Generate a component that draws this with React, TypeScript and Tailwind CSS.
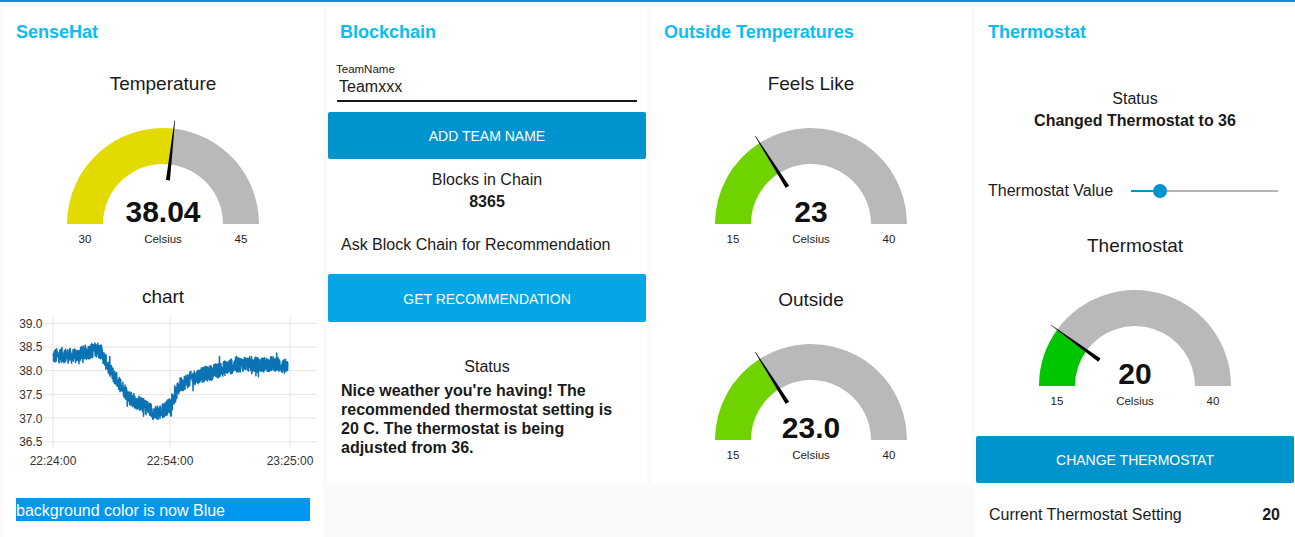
import React from "react";

const TEXT = "#1a1a1a";

function Gauge({
  title,
  value,
  min,
  max,
  v,
  color,
}: {
  title: string;
  value: string;
  min: number;
  max: number;
  v: number;
  color: string;
}) {
  const cx = 160,
    cy = 126,
    R = 96,
    r = 60;
  const frac = (v - min) / (max - min);
  const theta = Math.PI * (1 - frac);
  const pt = (rad: number, a: number) => [cx + rad * Math.cos(a), cy - rad * Math.sin(a)];
  const arc = (a1: number, a2: number) => {
    const [x1, y1] = pt(R, a1);
    const [x2, y2] = pt(R, a2);
    const [x3, y3] = pt(r, a2);
    const [x4, y4] = pt(r, a1);
    return `M${x1} ${y1} A${R} ${R} 0 0 1 ${x2} ${y2} L${x3} ${y3} A${r} ${r} 0 0 0 ${x4} ${y4} Z`;
  };
  const d = [Math.cos(theta), -Math.sin(theta)];
  const p = [Math.sin(theta), Math.cos(theta)];
  const b = [cx + 44 * d[0], cy + 44 * d[1]];
  const t = [cx + 104 * d[0], cy + 104 * d[1]];
  const needle = [
    [b[0] + 2 * p[0], b[1] + 2 * p[1]],
    [t[0] + 0.3 * p[0], t[1] + 0.3 * p[1]],
    [t[0] - 0.3 * p[0], t[1] - 0.3 * p[1]],
    [b[0] - 2 * p[0], b[1] - 2 * p[1]],
  ]
    .map((q) => q.join(","))
    .join(" ");
  return (
    <div className="flex flex-col items-center">
      <div className="h-[30px] pt-[1px] leading-[30px] text-[19px]" style={{ color: TEXT }}>
        {title}
      </div>
      <svg width={320} height={150} className="block">
        <path d={arc(Math.PI, theta)} fill={color} />
        <path d={arc(theta, 0)} fill="#b9b9b9" />
        <polygon points={needle} fill="#000" />
        <text x={160} y={cy - 2} textAnchor="middle" fontSize={30} fontWeight={700} fill="#111">
          {value}
        </text>
        <text x={82} y={cy + 19} textAnchor="middle" fontSize={11.5} fill="#222">
          {min}
        </text>
        <text x={160} y={cy + 19} textAnchor="middle" fontSize={11.5} fill="#222">
          Celsius
        </text>
        <text x={238} y={cy + 19} textAnchor="middle" fontSize={11.5} fill="#222">
          {max}
        </text>
      </svg>
    </div>
  );
}

function buildData() {
  const keys: [number, number][] = [
    [53, 38.3],
    [62, 38.33],
    [75, 38.3],
    [85, 38.38],
    [97, 38.45],
    [101, 38.4],
    [110, 38.0],
    [120, 37.72],
    [130, 37.42],
    [140, 37.3],
    [150, 37.18],
    [156, 37.08],
    [165, 37.18],
    [172, 37.32],
    [180, 37.7],
    [190, 37.82],
    [200, 37.9],
    [210, 37.95],
    [220, 38.02],
    [232, 38.1],
    [245, 38.15],
    [260, 38.12],
    [275, 38.15],
    [288, 38.06],
  ];
  let seed = 12345;
  const rnd = () => {
    seed = (seed * 1103515245 + 12345) % 2147483648;
    return seed / 2147483648;
  };
  const pts: string[] = [];
  const N = 1200;
  for (let i = 0; i <= N; i++) {
    const x = 53 + ((288 - 53) * i) / N;
    let k = 0;
    while (k < keys.length - 2 && keys[k + 1][0] < x) k++;
    const [x0, v0] = keys[k];
    const [x1, v1] = keys[k + 1];
    const f = Math.min(1, Math.max(0, (x - x0) / (x1 - x0)));
    let v = v0 + (v1 - v0) * f;
    v += (rnd() - 0.5) * 0.32;
    if (rnd() < 0.05) v += (rnd() - 0.5) * 0.34;
    const sx = x - 3;
    const sy = 15.3 + (39 - v) * 47.36;
    pts.push(`${sx.toFixed(2)},${sy.toFixed(2)}`);
  }
  return pts.join(" ");
}

const chartData = buildData();

function Chart() {
  const ys = [39.0, 38.5, 38.0, 37.5, 37.0, 36.5];
  const xs: [number, string][] = [
    [50, "22:24:00"],
    [167, "22:54:00"],
    [287, "23:25:00"],
  ];
  return (
    <svg width={320} height={165} className="block">
      {ys.map((v, i) => {
        const y = 15.3 + i * 23.68;
        return (
          <g key={v}>
            <line x1={40} x2={314} y1={y} y2={y} stroke="#e4e4e4" strokeWidth={1} />
            <text x={39.5} y={y + 4.5} textAnchor="end" fontSize={12} fill="#333">
              {v.toFixed(1)}
            </text>
          </g>
        );
      })}
      {xs.map(([x, l]) => (
        <g key={l}>
          <line x1={x} x2={x} y1={8.7} y2={140} stroke="#e4e4e4" strokeWidth={1} />
          <text x={x} y={157} textAnchor="middle" fontSize={12} fill="#333">
            {l}
          </text>
        </g>
      ))}
      <polyline points={chartData} fill="none" stroke="#0b72b3" strokeWidth={1.5} strokeLinejoin="round" />
    </svg>
  );
}

function Title({ children }: { children: React.ReactNode }) {
  return (
    <div className="h-[46px] pt-[2px] flex items-center px-[13px] text-[18px] font-bold text-[#0bbdf3]">
      {children}
    </div>
  );
}

export default function App() {
  return (
    <div
      className="w-[1295px] h-[537px] overflow-hidden bg-[#fafafa] font-['Liberation_Sans',Arial,sans-serif]"
      style={{ color: TEXT }}
    >
      <div className="h-[2px] bg-[#0094ce]" />
      <div className="flex items-start gap-[4px] pl-[3px] pt-[6px]">
        {/* SenseHat */}
        <div className="w-[320px] h-[529px] bg-white flex flex-col">
          <Title>SenseHat</Title>
          <div className="mt-[14px]">
            <Gauge title="Temperature" value="38.04" min={30} max={45} v={38.04} color="#e2da00" />
          </div>
          <div className="mt-[36px] h-[24px] pt-[1px] leading-[24px] text-center text-[19px]">chart</div>
          <Chart />
          <div className="mt-[25px] mx-[13px] w-[294px] h-[23px] bg-[#0097f0] text-white text-[16px] leading-[25px] whitespace-nowrap overflow-hidden">
            background color is now Blue
          </div>
        </div>

        {/* Blockchain */}
        <div className="w-[320px] h-[477px] bg-white flex flex-col">
          <Title>Blockchain</Title>
          <div className="mt-[8px] mx-[10px] border-b-2 border-[#1a1a1a] pb-[4px]">
            <div className="h-[14px] leading-[14px] text-[11.5px] -ml-[1px]">TeamName</div>
            <div className="h-[20px] leading-[21px] text-[16px] pl-[2px]">Teamxxx</div>
          </div>
          <div className="mt-[10px] mx-[1px] h-[47px] pt-[2px] rounded-[2px] bg-[#0094ce] text-white text-[14px] flex items-center justify-center">
            ADD TEAM NAME
          </div>
          <div className="mt-[10px] text-center text-[16px] leading-[22px]">Blocks in Chain</div>
          <div className="text-center text-[16px] leading-[22px] font-bold">8365</div>
          <div className="mt-[22px] px-[14px] text-[16px] leading-[20px]">Ask Block Chain for Recommendation</div>
          <div className="mt-[19px] mx-[1px] h-[48px] pt-[2px] rounded-[2px] bg-[#04a6e7] text-white text-[14px] flex items-center justify-center">
            GET RECOMMENDATION
          </div>
          <div className="mt-[35px] text-center text-[16px] leading-[20px]">Status</div>
          <div className="mt-[4px] px-[14px] text-[16px] leading-[19px] font-bold">
            Nice weather you're having! The
            <br />
            recommended thermostat setting is
            <br />
            20 C. The thermostat is being
            <br />
            adjusted from 36.
          </div>
        </div>

        {/* Outside Temperatures */}
        <div className="w-[320px] h-[477px] bg-white flex flex-col">
          <Title>Outside Temperatures</Title>
          <div className="mt-[14px]">
            <Gauge title="Feels Like" value="23" min={15} max={40} v={23} color="#6fd300" />
          </div>
          <div className="mt-[36px]">
            <Gauge title="Outside" value="23.0" min={15} max={40} v={23} color="#6fd300" />
          </div>
        </div>

        {/* Thermostat */}
        <div className="w-[320px] h-[529px] bg-white flex flex-col">
          <Title>Thermostat</Title>
          <div className="mt-[34px] text-center text-[16px] leading-[22px]">Status</div>
          <div className="text-center text-[16px] leading-[22px] font-bold">Changed Thermostat to 36</div>
          <div className="mt-[42px] h-[32px] pt-[2px] flex items-center pl-[13px]">
            <div className="w-[143px] text-[16px]">Thermostat Value</div>
            <div className="relative w-[147px] h-[14px] flex items-center">
              <div className="w-[29px] h-[2px] bg-[#0094ce]" />
              <div className="flex-1 h-[2px] bg-[#b5b5b5]" />
              <div className="absolute left-[22px] top-0 w-[14px] h-[14px] rounded-full bg-[#0094ce]" />
            </div>
          </div>
          <div className="mt-[24px]">
            <Gauge title="Thermostat" value="20" min={15} max={40} v={20} color="#00c600" />
          </div>
          <div className="mt-[26px] mx-[1px] h-[47px] pt-[2px] rounded-[2px] bg-[#0094ce] text-white text-[14px] flex items-center justify-center">
            CHANGE THERMOSTAT
          </div>
          <div className="mt-[22px] h-[20px] flex items-center justify-between pl-[14px] pr-[15px] text-[16px]">
            <span>Current Thermostat Setting</span>
            <span className="font-bold">20</span>
          </div>
        </div>
      </div>
    </div>
  );
}
